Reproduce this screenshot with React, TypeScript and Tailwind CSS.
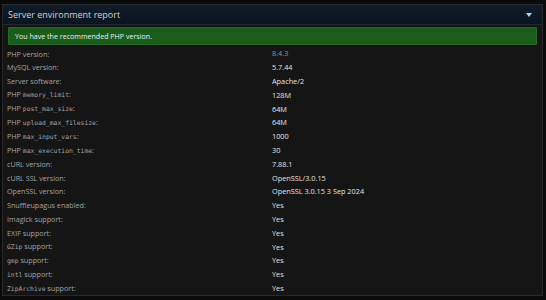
import React from "react";

type Row = { label: React.ReactNode; value: string; accent?: boolean };

const Mono = ({ children }: { children: React.ReactNode }) => (
    <span className="font-['DejaVu_Sans_Mono',monospace] text-[6.4px]">{children}</span>
);

const rows: Row[] = [
    { label: "PHP version:", value: "8.4.3", accent: true },
    { label: "MySQL version:", value: "5.7.44" },
    { label: "Server software:", value: "Apache/2" },
    { label: <>PHP <Mono>memory_limit</Mono>:</>, value: "128M" },
    { label: <>PHP <Mono>post_max_size</Mono>:</>, value: "64M" },
    { label: <>PHP <Mono>upload_max_filesize</Mono>:</>, value: "64M" },
    { label: <>PHP <Mono>max_input_vars</Mono>:</>, value: "1000" },
    { label: <>PHP <Mono>max_execution_time</Mono>:</>, value: "30" },
    { label: "cURL version:", value: "7.88.1" },
    { label: "cURL SSL version:", value: "OpenSSL/3.0.15" },
    { label: "OpenSSL version:", value: "OpenSSL 3.0.15 3 Sep 2024" },
    { label: "Snuffleupagus enabled:", value: "Yes" },
    { label: "Imagick support:", value: "Yes" },
    { label: "EXIF support:", value: "Yes" },
    { label: <><Mono>GZip</Mono> support:</>, value: "Yes" },
    { label: <><Mono>gmp</Mono> support:</>, value: "Yes" },
    { label: <><Mono>intl</Mono> support:</>, value: "Yes" },
    { label: <><Mono>ZipArchive</Mono> support:</>, value: "Yes" },
];

export default function App() {
    return (
        <div className="w-[546px] h-[300px] bg-[#0a0a0a] pt-[4px] pl-[2px] font-['Open_Sans',sans-serif]">
            <div className="w-[541px] h-[292px] bg-[#151515] border border-[#2a2a2a] flex flex-col">
                {/* header */}
                <div className="h-[20px] shrink-0 flex items-center justify-between pl-[5px] pr-[10px] bg-gradient-to-b from-[#0f1c29] to-[#0b1520] border-b border-[#1d2a36]">
                    <span className="text-[9px] text-[#c9d3dd]">Server environment report</span>
                    <svg width="6" height="4" viewBox="0 0 6 4" className="mt-[1px]">
                        <polygon points="0,0 6,0 3,4" fill="#b7d2ec" />
                    </svg>
                </div>

                {/* notice */}
                <div className="mt-[2px] mx-[5px] h-[18px] shrink-0 flex items-center px-[6px] bg-[#1b5b1b] border border-[#236b23] rounded-[1px]">
                    <span className="text-[7.1px] text-[#e8f2e8]">You have the recommended PHP version.</span>
                </div>

                {/* rows */}
                <div className="mt-[2px] flex flex-col">
                    {rows.map((r, i) => (
                        <div key={i} className="h-[13.8px] flex items-center">
                            <div className="w-[269px] pl-[4px] text-[7.2px] text-[#a3a3a3]">{r.label}</div>
                            <div className={`text-[7.3px] ${r.accent ? "text-[#7d9dc0]" : "text-[#e4e4e4]"}`}>{r.value}</div>
                        </div>
                    ))}
                </div>
            </div>
        </div>
    );
}
